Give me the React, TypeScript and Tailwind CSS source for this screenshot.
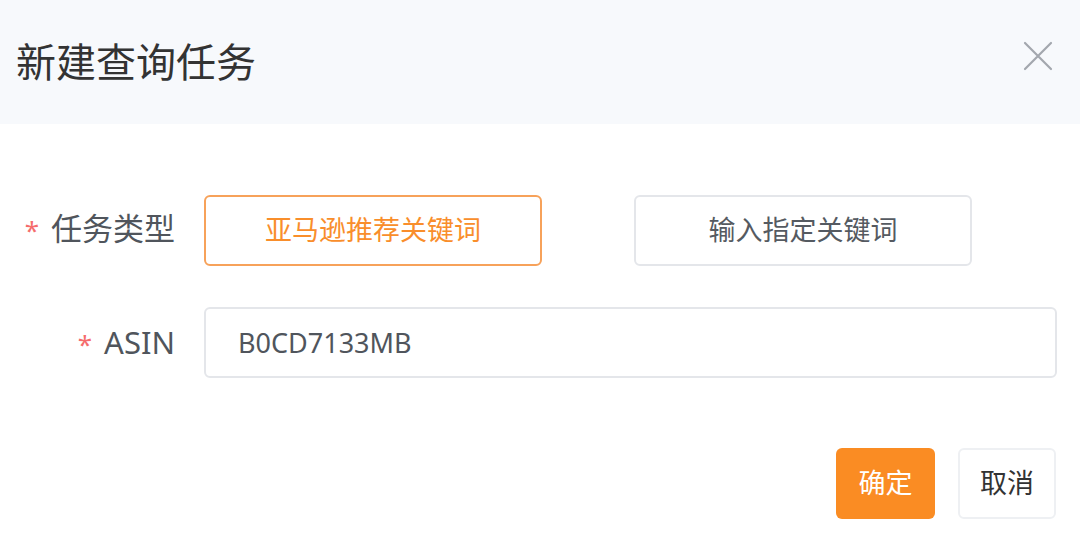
import React, { useState } from "react";

const font = { fontFamily: '"Noto Sans", "Noto Sans CJK SC", sans-serif' };

export default function App() {
  const [mode, setMode] = useState<"amazon" | "custom">("amazon");
  const [asin, setAsin] = useState("B0CD7133MB");

  const typeBtn = (active: boolean) =>
    active
      ? "w-[338px] h-[71px] rounded-[6px] border-2 border-[#f7a25a] text-[#f98e2b] text-[27px] bg-white"
      : "w-[338px] h-[71px] rounded-[6px] border-2 border-[#e4e6ea] text-[#555a61] text-[27px] bg-white";

  return (
    <div className="w-[1080px] h-[554px] bg-white overflow-hidden" style={font}>
      <div className="h-[124px] bg-[#f7f9fc] flex items-center justify-between pl-[16px] pr-[26px]">
        <h1 className="text-[40px] text-[#333] font-normal leading-none">新建查询任务</h1>
        <button className="w-[32px] h-[32px] flex items-center justify-center -mt-[13px]">
          <svg width="30" height="30" viewBox="0 0 30 30" fill="none" stroke="#a3a7ae" strokeWidth="2.2" strokeLinecap="round">
            <path d="M2 2L28 28M28 2L2 28" />
          </svg>
        </button>
      </div>

      <div className="pt-[71px] flex flex-col gap-[41px]">
        <div className="flex items-center gap-[29px]">
          <label className="w-[175px] text-right text-[31px] text-[#50555c] leading-none -mt-[4px]">
            <span className="text-[#f56c6c] mr-[12px] text-[26px]">*</span>任务类型
          </label>
          <div className="flex gap-[92px]">
            <button className={typeBtn(mode === "amazon")} onClick={() => setMode("amazon")}>
              亚马逊推荐关键词
            </button>
            <button className={typeBtn(mode === "custom")} onClick={() => setMode("custom")}>
              输入指定关键词
            </button>
          </div>
        </div>

        <div className="flex items-center gap-[29px]">
          <label className="w-[175px] text-right text-[31px] text-[#50555c] leading-none">
            <span className="text-[#f56c6c] mr-[12px] text-[26px]">*</span>ASIN
          </label>
          <input
            value={asin}
            onChange={(e) => setAsin(e.target.value)}
            className="w-[853px] h-[71px] rounded-[6px] border-2 border-[#e4e6ea] pl-[32px] text-[27px] text-[#50555c] outline-none"
            style={font}
          />
        </div>
      </div>

      <div className="flex justify-end gap-[23px] pr-[24px] mt-[70px]">
        <button className="w-[99px] h-[71px] rounded-[6px] bg-[#fa8c23] text-white text-[27px]">确定</button>
        <button className="w-[98px] h-[71px] rounded-[6px] border-2 border-[#eef0f3] bg-white text-[#333] text-[27px]">
          取消
        </button>
      </div>
    </div>
  );
}
